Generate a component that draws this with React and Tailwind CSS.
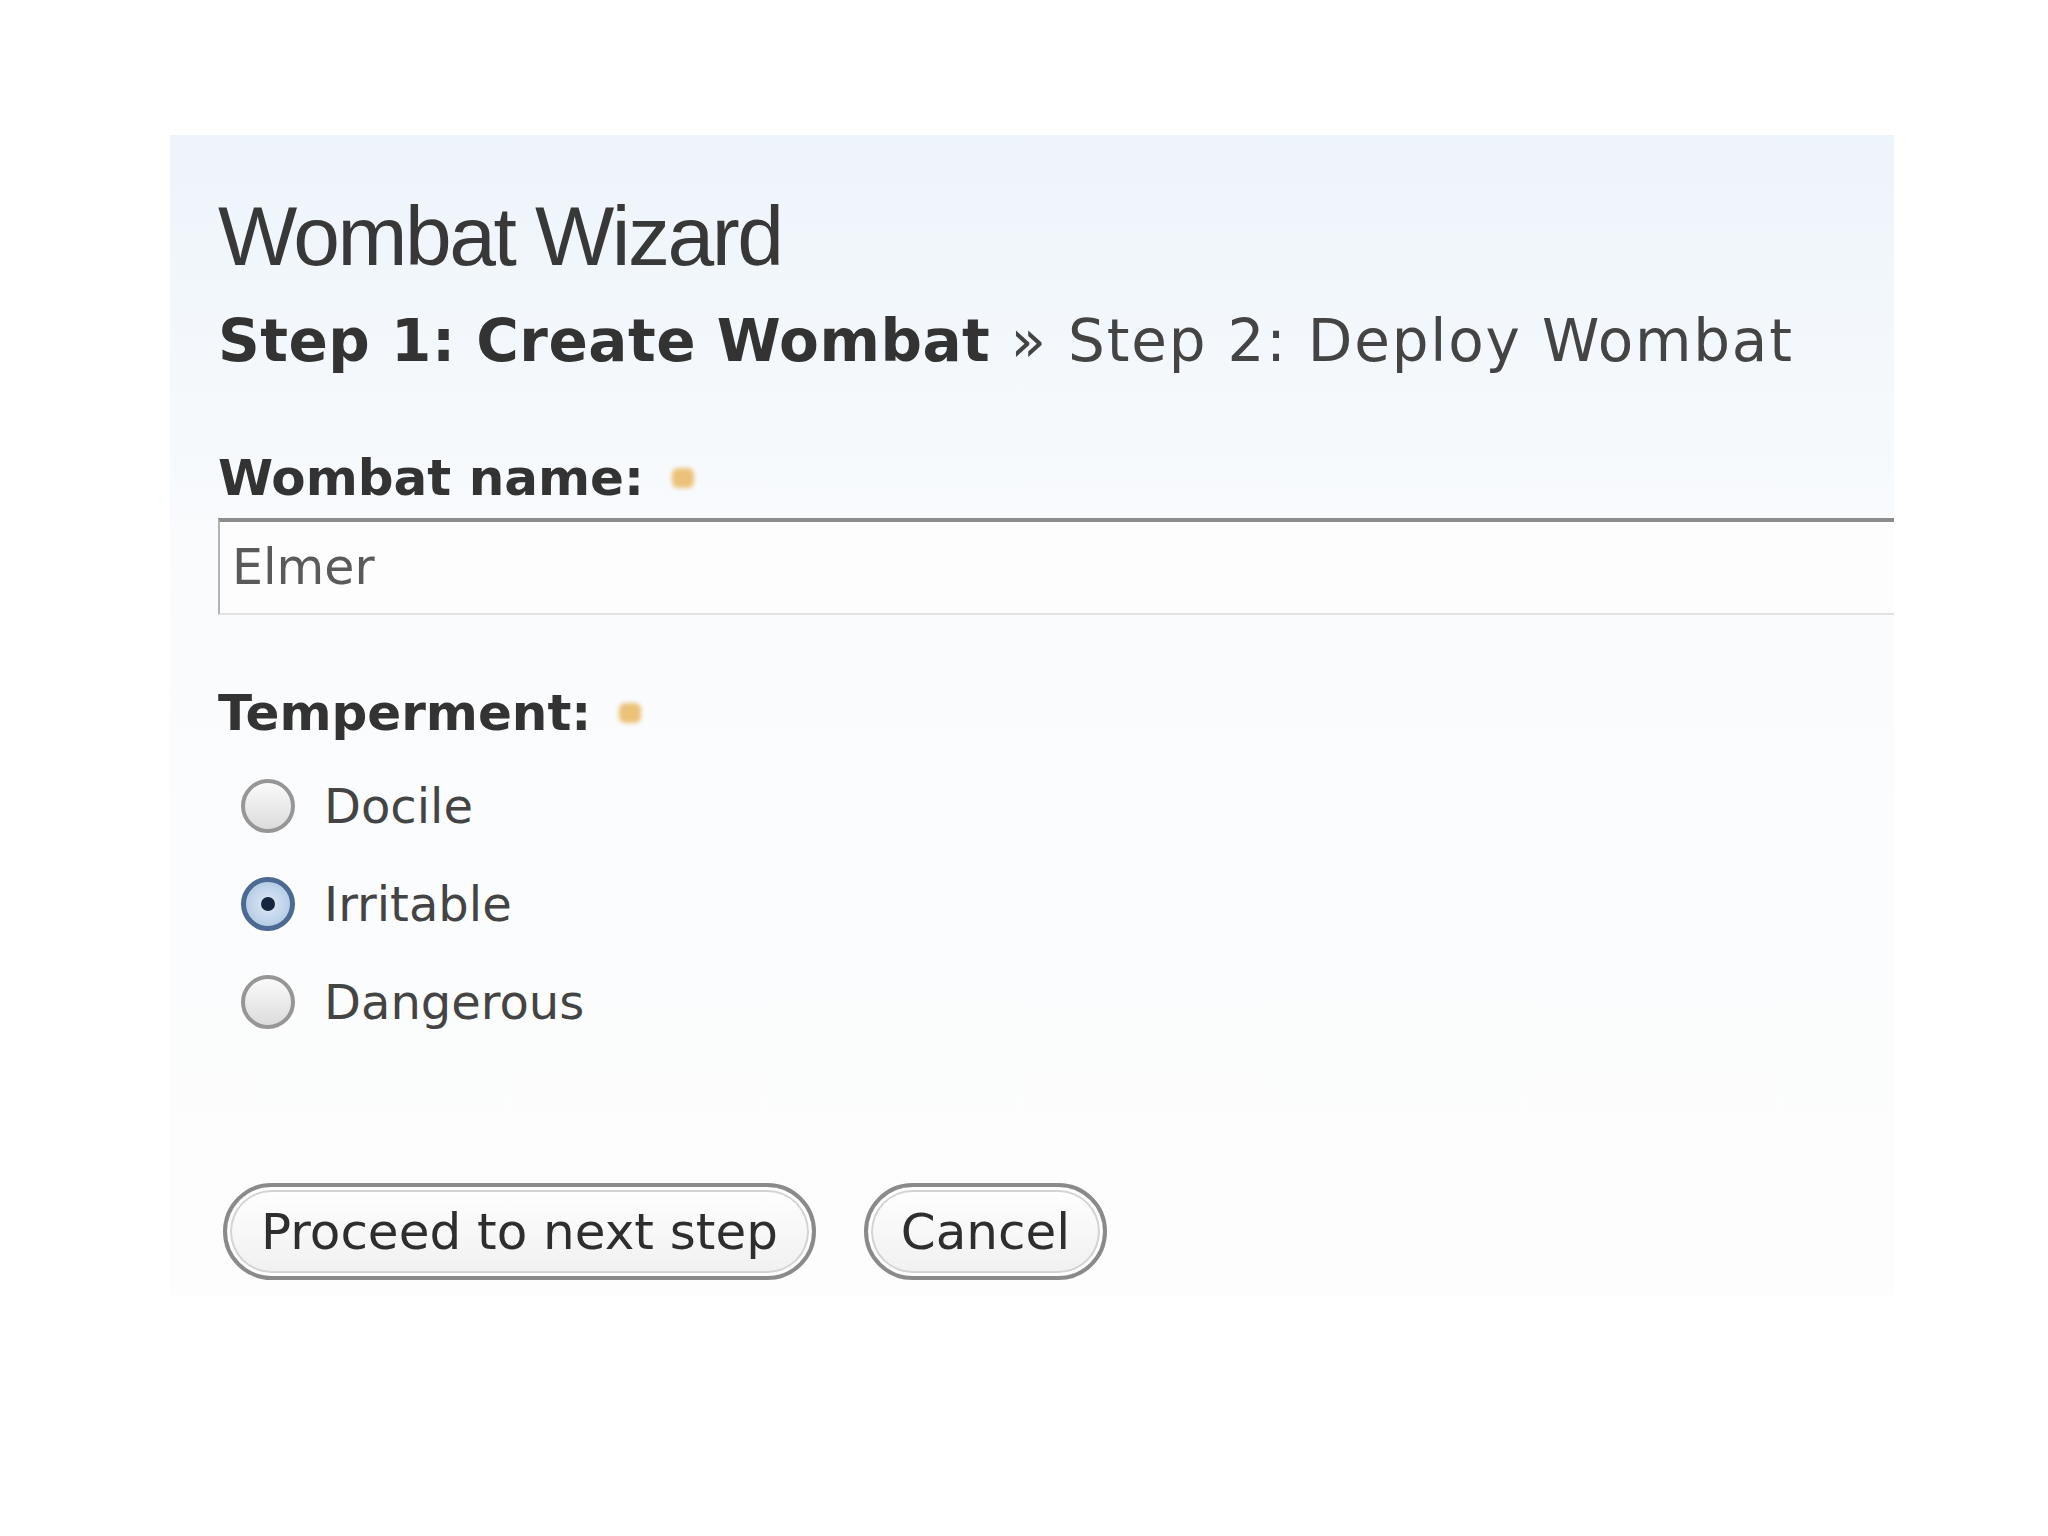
import React from "react";

const Required = () => (
  <span className="ml-[28px] inline-block h-[20px] w-[22px] rounded-[6px] bg-[#ecc27a] blur-[2px] align-middle" />
);

const Radio = ({ label, checked }) => (
  <label className="flex h-[98px] items-center gap-[29px] pl-[23px]">
    {checked ? (
      <span className="flex h-[54px] w-[54px] items-center justify-center rounded-full border-[5px] border-[#4d6a94] bg-[radial-gradient(circle,#dfeaf6_0%,#b7cde6_70%,#8eaacb_100%)]">
        <span className="h-[14px] w-[14px] rounded-full bg-[#152640]" />
      </span>
    ) : (
      <span className="h-[54px] w-[54px] rounded-full border-[4px] border-[#969696] bg-linear-to-b from-[#fafafa] to-[#dcdcdc]" />
    )}
    <span className="text-[48px] leading-none text-[#444]">{label}</span>
  </label>
);

const App = () => {
  return (
    <div className="min-h-screen bg-white pl-[170px] pt-[135px] font-['DejaVu_Sans',sans-serif]">
      <div className="h-[1160px] w-[1724px] overflow-hidden bg-linear-to-b from-[#edf4fa] via-[#f9fbfd] via-35% to-[#fdfdfd] pl-[48px] pt-[59px]">
        <h1 className="font-['Liberation_Sans',Arial,sans-serif] text-[84px] leading-none tracking-[-2.5px] text-[#383838]">
          Wombat Wizard
        </h1>
        <p className="mt-[34px] text-[58px] leading-none tracking-[1.8px] text-[#444]">
          <span className="font-bold tracking-[0.5px] text-[#333]">Step 1: Create Wombat</span> » Step 2: Deploy Wombat
        </p>

        <div className="mt-[83px] flex items-center text-[50px] font-bold leading-none text-[#333]">
          Wombat name:
          <Required />
        </div>
        <input
          readOnly
          value="Elmer"
          className="mt-[15px] block h-[97px] w-[1800px] border-b-2 border-l-2 border-r-0 border-t-[4px] border-b-[#e2e2e2] border-l-[#b4b4b4] border-t-[#8c8c8c] bg-[#fdfdfd] pl-[12px] text-[49px] text-[#5a5a5a] outline-none"
        />

        <div className="mt-[73px] flex items-center text-[50px] font-bold leading-none text-[#333]">
          Temperment:
          <Required />
        </div>
        <div className="mt-[19px]">
          <Radio label="Docile" />
          <Radio label="Irritable" checked />
          <Radio label="Dangerous" />
        </div>

        <div className="mt-[132px] flex gap-[48px] pl-[5px]">
          <button
            type="button"
            className="h-[97px] w-[593px] rounded-full border-[4px] border-[#8a8a8a] bg-linear-to-b from-white to-[#f0f0f0] text-[50px] leading-none text-[#2e2e2e] shadow-[inset_0_0_0_3px_#ffffff,inset_0_0_0_5px_#d4d4d4]"
          >
            Proceed to next step
          </button>
          <button
            type="button"
            className="h-[97px] w-[243px] rounded-full border-[4px] border-[#8a8a8a] bg-linear-to-b from-white to-[#f0f0f0] text-[50px] leading-none text-[#2e2e2e] shadow-[inset_0_0_0_3px_#ffffff,inset_0_0_0_5px_#d4d4d4]"
          >
            Cancel
          </button>
        </div>
      </div>
    </div>
  );
};

export default App;
